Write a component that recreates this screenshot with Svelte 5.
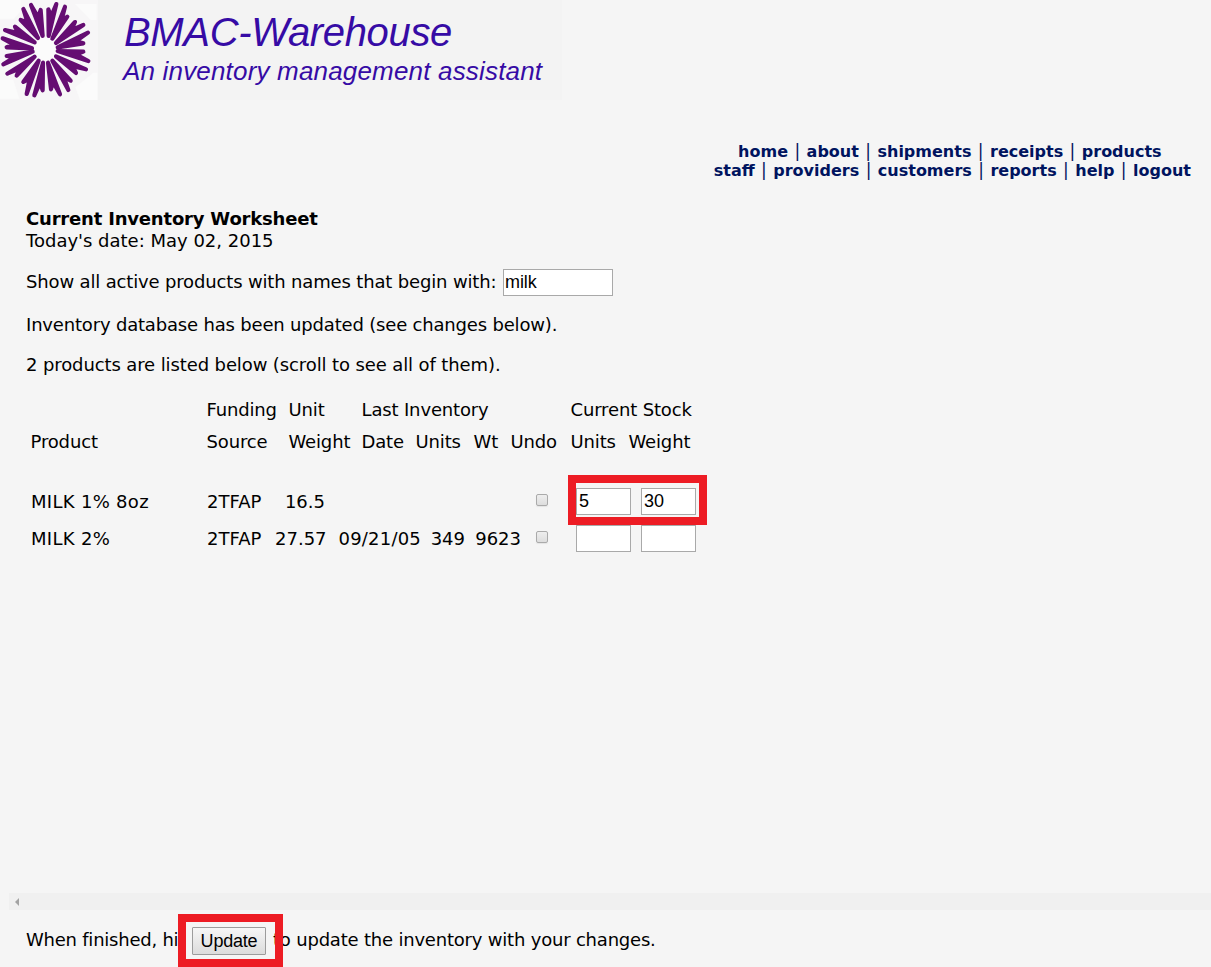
<script>
  const navTop = ['home', 'about', 'shipments', 'receipts', 'products'];
  const navBottom = ['staff', 'providers', 'customers', 'reports', 'help', 'logout'];
  const rows = [
    { name: 'MILK 1% 8oz', source: '2TFAP', unit: '16.5', date: '', units: '', wt: '', newUnits: '5', newWt: '30' },
    { name: 'MILK 2%', source: '2TFAP', unit: '27.57', date: '09/21/05', units: '349', wt: '9623', newUnits: '', newWt: '' }
  ];
  // Each petal of the emblem: two finger tips and the inner point they share
  const petals = [
    [93, 15, 122, 30, 128, 108], [70, 27, 62, 60, 114, 114], [45, 80, 15, 90, 104, 127], [8, 115, 20, 142, 96, 145],
    [20, 168, 10, 193, 98, 155], [22, 221, 50, 227, 104, 170], [70, 246, 80, 282, 116, 182], [103, 286, 128, 271, 129, 188],
    [153, 268, 180, 283, 144, 188], [205, 270, 212, 242, 157, 182], [228, 219, 258, 208, 168, 169], [265, 183, 250, 155, 173, 153],
    [250, 130, 264, 98, 173, 142], [250, 75, 225, 66, 168, 129], [202, 50, 195, 20, 157, 116], [169, 12, 145, 28, 146, 108]
  ];
  const shape = ([x1, y1, x2, y2, ax, ay]) => {
    const nx = ax + ((x1 + x2) / 2 - ax) * 0.66;
    const ny = ay + ((y1 + y2) / 2 - ay) * 0.66;
    return `M${ax} ${ay}L${x1} ${y1}L${nx} ${ny}L${x2} ${y2}Z`;
  };
</script>

<div class="page">
  <header>
    <svg class="emblem" width="98" height="100" viewBox="0 0 294 300">
      <rect width="294" height="300" fill="#f7f6f7" />
      <path d="M0 0H62V34L42 56H0ZM225 12H290V60H272ZM0 240H40L58 296H0ZM226 262L280 218H292V300H240ZM100 128L128 112H148L170 132V166L150 186H122L100 166Z" fill="#fbfbfb" />
      <g fill="#650d72" stroke="#650d72" stroke-width="12.5" stroke-linecap="round" stroke-linejoin="round">
        {#each petals as p}<path d={shape(p)} />{/each}
      </g>
    </svg>
    <div class="brand">
      <h1>BMAC-Warehouse</h1>
      <h2>An inventory management assistant</h2>
    </div>
  </header>
  <nav>
    <div class="first">{#each navTop as n, i}{#if i}<i>|</i>{/if}<a href="#{n}">{n}</a>{/each}</div>
    <div>{#each navBottom as n, i}{#if i}<i>|</i>{/if}<a href="#{n}">{n}</a>{/each}</div>
  </nav>
  <main>
    <strong>Current Inventory Worksheet</strong>
    <p>Today's date: May 02, 2015</p>
    <p class="filter"><label for="prefix">Show all active products with names that begin with:</label><input id="prefix" value="milk" /></p>
    <p class="status">Inventory database has been updated (see changes below).</p>
    <p class="count">2 products are listed below (scroll to see all of them).</p>
    <div class="row top">
      <b></b><b>Funding</b><b>Unit</b><b class="last">Last Inventory</b><b class="current">Current Stock</b>
    </div>
    <div class="row head">
      <b>Product</b><b>Source</b><b>Weight</b><b>Date</b><b>Units</b><b>Wt</b><b>Undo</b><b>Units</b><b>Weight</b>
    </div>
    {#each rows as r, i}
      <div class="row item">
        <span class="name">{r.name}</span><span>{r.source}</span><span class="num">{r.unit}</span><span class="num date">{r.date}</span>
        <span class="num">{r.units}</span><span class="num">{r.wt}</span><input type="checkbox" />
        <input class="qty" value={r.newUnits} /><input class="qty" value={r.newWt} />
        {#if i === 0}<div class="mark stock"></div>{/if}
      </div>
    {/each}
  </main>
  <div class="scrollbar"><svg width="4" height="8"><path d="M4 0V8L0 4Z" fill="#a3a3a3" /></svg></div>
  <footer>
    <span class="before">When finished, hit</span>
    <div class="action"><button>Update</button><div class="mark update"></div></div>
    <span class="after">to update the inventory with your changes.</span>
  </footer>
</div>

<style>
  :global(body) { background: #f5f5f5; }
  .page { height: 967px; overflow: hidden; display: flex; flex-direction: column; background: #f5f5f5; color: #000; font: 18px/22px "DejaVu Sans", sans-serif; white-space: nowrap; }
  header { display: flex; width: 562px; height: 100px; background: #f3f3f3; }
  .emblem { flex: none; }
  .brand { padding: 10px 0 0 25px; color: #360ba5; font-family: "Liberation Sans", sans-serif; font-style: italic; }
  h1, h2, p { margin: 0; font-weight: 400; }
  h1 { padding-left: 1px; font-size: 40px; line-height: 45px; letter-spacing: -0.34px; }
  h2 { font-size: 26px; line-height: 33px; letter-spacing: 0.18px; }
  nav { height: 38px; padding: 42px 20px 0 0; align-self: flex-end; font-weight: 700; font-size: 16px; line-height: 19px; color: #00145f; text-align: center; }
  nav a { color: inherit; text-decoration: none; }
  nav i { display: inline-block; width: 18.6px; font-style: normal; font-weight: 400; font-size: 17px; line-height: 17px; text-align: center; }
  .first { padding-right: 5px; }
  main { flex: 1; padding: 28px 0 0 26px; }
  strong { display: block; letter-spacing: -0.19px; }
  .filter { display: flex; height: 27px; margin-top: 17px; }
  .filter label { width: 477px; padding-top: 2px; letter-spacing: -0.155px; }
  input { box-sizing: border-box; border: 1px solid #a9a9a9; border-radius: 0; margin: 0; padding: 0 1px; background: #fff; color: #000; font: 18px "Liberation Sans", sans-serif; height: 27px; }
  .filter input { width: 110px; letter-spacing: -0.1px; }
  .status { margin-top: 18px; letter-spacing: -0.18px; }
  .count { margin-top: 18px; letter-spacing: -0.11px; }
  .row { display: grid; position: relative; grid-template-columns: 176px 82px 73px 54px 58px 37px 60px 58px 80px; padding-left: 4.5px; align-items: center; }
  .row b { font-weight: 400; letter-spacing: -0.15px; }
  .top { margin-top: 18px; height: 32px; }
  .last { grid-column: 4 / 8; }
  .current { grid-column: 8 / 10; }
  .head { height: 32px; margin-bottom: 25px; }
  .item { height: 37px; padding-left: 5px; grid-template-columns: 176px 68px 50px 96px 44px 56px 55px 65px 55px; }
  .name { letter-spacing: 0.3px; }
  .num { text-align: right; }
  .date { letter-spacing: 0.2px; }
  .qty { width: 55px; padding-left: 2px; }
  input[type="checkbox"] { appearance: none; width: 12px; height: 12px; margin: 0 0 3px 15px; border: 1px solid #aaa; border-radius: 2px; background: linear-gradient(#eee, #ddd); box-shadow: 0 1px 1px #e4e4e4; }
  .mark { position: absolute; border: 8px solid #ed1c24; box-sizing: border-box; }
  .stock { left: 542px; top: -8px; width: 139px; height: 50px; }
  .scrollbar { height: 17px; margin-left: 9px; background: #f0f0f0; display: flex; align-items: center; padding-left: 6px; }
  footer { height: 57px; padding-left: 26px; box-sizing: border-box; display: flex; }
  .before { width: 166px; padding-top: 19px; letter-spacing: -0.23px; }
  .action { position: relative; margin-top: 17px; }
  button { display: block; box-sizing: border-box; width: 74px; height: 28px; padding: 0; border: 1px solid #9c9c9c; border-radius: 1px; background: linear-gradient(#f6f6f6, #dcdcdc); color: #000; font: 18px "Liberation Sans", sans-serif; letter-spacing: -0.2px; }
  .update { left: -14px; top: -13px; width: 105px; height: 53px; }
  .after { padding: 19px 0 0 7px; letter-spacing: -0.2px; }
</style>
